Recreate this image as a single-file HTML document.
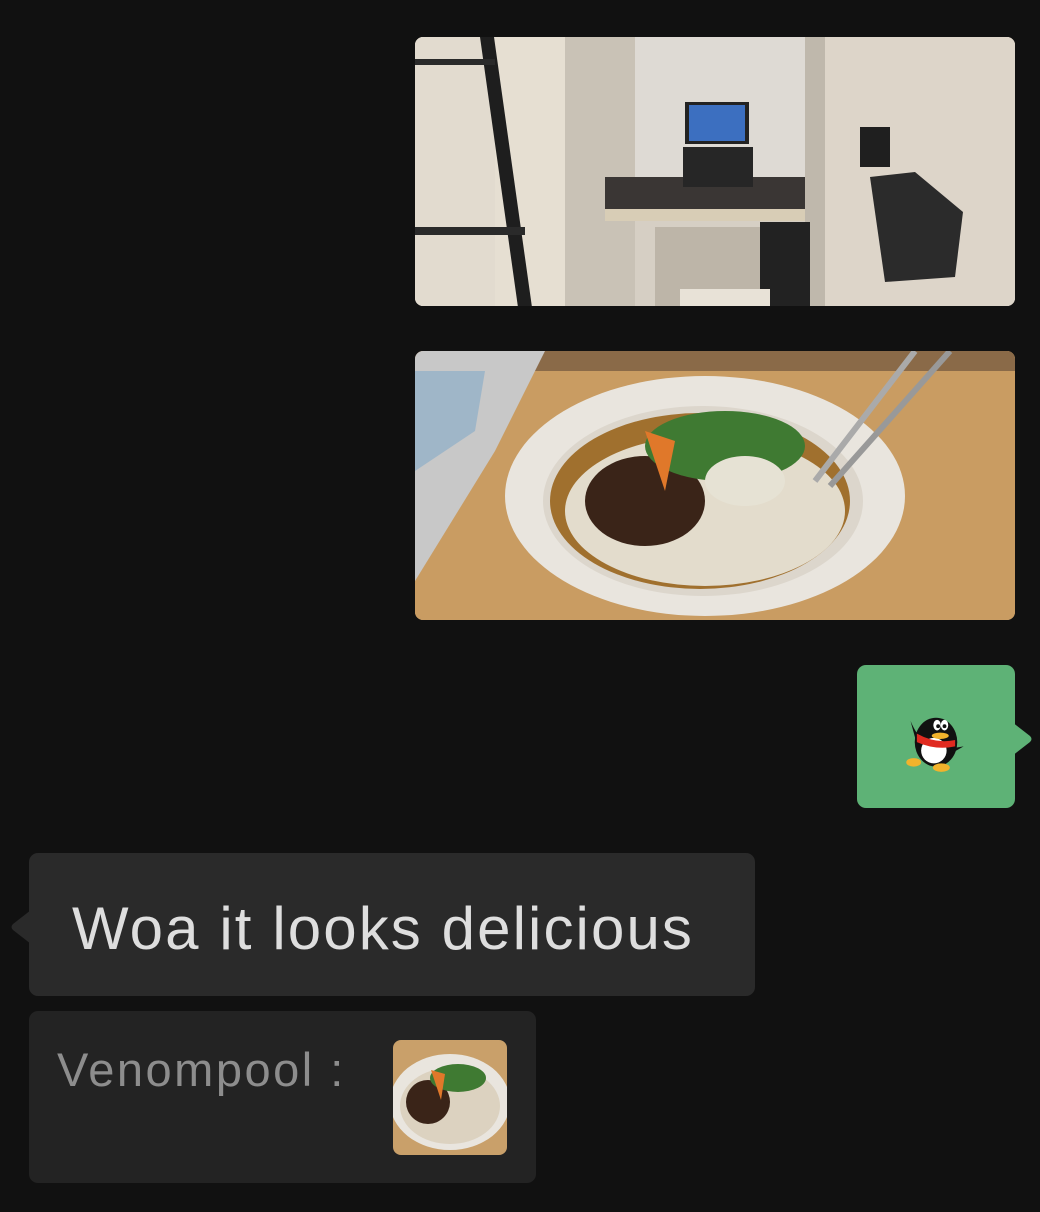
<!DOCTYPE html>
<html><head><meta charset="utf-8"><style>
body{margin:0;width:1040px;height:1212px;background:#111111;position:relative;overflow:hidden;font-family:"Liberation Sans","Noto Sans CJK SC",sans-serif}
.abs{position:absolute}
</style></head><body>
<div class="abs" style="left:415px;top:37px;width:600px;height:269px;border-radius:8px;overflow:hidden;background:#cfc8bd">
<svg width="600" height="269" viewBox="0 0 600 269">
<rect width="600" height="269" fill="#d6cfc4"/>
<rect x="0" y="0" width="90" height="269" fill="#e2dbcf"/>
<rect x="80" y="0" width="115" height="269" fill="#e6dfd2"/>
<rect x="65" y="0" width="14" height="269" fill="#1e1e1e" transform="skewX(8)"/>
<rect x="0" y="190" width="110" height="8" fill="#2a2a2a"/>
<rect x="0" y="22" width="80" height="6" fill="#2a2a2a"/>
<rect x="220" y="0" width="180" height="180" fill="#dedad4"/>
<rect x="150" y="0" width="70" height="269" fill="#c9c2b6"/>
<rect x="190" y="170" width="240" height="14" fill="#d8cdb6"/>
<rect x="190" y="140" width="220" height="32" fill="#3a3634"/>
<rect x="270" y="65" width="64" height="42" fill="#222"/>
<rect x="274" y="68" width="56" height="36" fill="#3c6fc0"/>
<rect x="268" y="110" width="70" height="40" fill="#262626"/>
<rect x="390" y="0" width="20" height="269" fill="#bfb8ac"/>
<rect x="410" y="0" width="190" height="269" fill="#ddd5c9"/>
<path d="M455 140 L500 135 L548 175 L540 240 L470 245 Z" fill="#2b2b2b"/>
<rect x="445" y="90" width="30" height="40" fill="#1f1f1f"/>
<rect x="240" y="190" width="140" height="79" fill="#bdb5a8"/>
<rect x="345" y="185" width="50" height="84" fill="#222"/>
<rect x="265" y="252" width="90" height="17" fill="#e8e2d7"/>
</svg></div>
<div class="abs" style="left:415px;top:351px;width:600px;height:269px;border-radius:8px;overflow:hidden;background:#c9a06a">
<svg width="600" height="269" viewBox="0 0 600 269">
<rect width="600" height="269" fill="#c99c62"/>
<rect x="0" y="0" width="600" height="20" fill="#8a6a48"/>
<path d="M0 0 L130 0 L80 100 L0 230 Z" fill="#c8c8c8"/>
<path d="M0 20 L70 20 L60 80 L0 120 Z" fill="#9fb6c8"/>
<ellipse cx="290" cy="145" rx="200" ry="120" fill="#e9e5de"/>
<ellipse cx="288" cy="150" rx="160" ry="95" fill="#dcd6cc"/>
<ellipse cx="285" cy="150" rx="150" ry="88" fill="#a0702e"/>
<ellipse cx="290" cy="160" rx="140" ry="75" fill="#e3dccc"/>
<ellipse cx="230" cy="150" rx="60" ry="45" fill="#3a2418"/>
<ellipse cx="310" cy="95" rx="80" ry="35" fill="#3f7a32"/>
<path d="M230 80 L250 140 L260 90 Z" fill="#e0782a"/>
<ellipse cx="330" cy="130" rx="40" ry="25" fill="#e6e2d4"/>
<line x1="400" y1="130" x2="500" y2="0" stroke="#aaa" stroke-width="6"/>
<line x1="415" y1="135" x2="535" y2="0" stroke="#999" stroke-width="6"/>
</svg></div>
<div class="abs" style="left:857px;top:665px;width:158px;height:143px;border-radius:9px;background:#5eb276"></div>
<svg class="abs" style="left:1012px;top:722px" width="22" height="34" viewBox="0 0 22 34"><path d="M0 0 L18 14 Q21 17 18 20 L0 34 Z" fill="#5eb276"/></svg>
<svg class="abs" style="left:902px;top:708px" width="68" height="64" viewBox="0 0 64 60">
<ellipse cx="32" cy="32" rx="20" ry="23" fill="#111"/>
<ellipse cx="30" cy="40" rx="12" ry="12" fill="#fff"/>
<path d="M8 12 Q14 26 20 30 L14 34 Z" fill="#111"/>
<path d="M58 36 L44 44 L46 38 Z" fill="#111"/>
<path d="M14 24 Q32 34 50 30 L50 36 Q32 40 14 32 Z" fill="#e02a20"/>
<ellipse cx="36" cy="26" rx="8" ry="3" fill="#f2b32c"/>
<ellipse cx="33" cy="16" rx="3.5" ry="5" fill="#fff"/><ellipse cx="40" cy="16" rx="3.5" ry="5" fill="#fff"/>
<circle cx="34" cy="17" r="1.8" fill="#111"/><circle cx="40" cy="17" r="1.8" fill="#111"/>
<ellipse cx="11" cy="51" rx="7" ry="4" fill="#f2b32c"/><ellipse cx="37" cy="56" rx="8" ry="4" fill="#f2b32c"/>
</svg>
<div class="abs" style="left:29px;top:853px;width:726px;height:143px;border-radius:9px;background:#2a2a2a"></div>
<svg class="abs" style="left:9px;top:910px" width="22" height="34" viewBox="0 0 22 34"><path d="M22 0 L4 14 Q1 17 4 20 L22 34 Z" fill="#2a2a2a"/></svg>
<div class="abs" style="left:72px;top:893px;font-size:60px;line-height:72px;color:#dedede;letter-spacing:2.1px;white-space:nowrap">Woa it looks delicious</div>
<div class="abs" style="left:29px;top:1011px;width:507px;height:172px;border-radius:9px;background:#232323"></div>
<div class="abs" style="left:57px;top:1040px;font-size:47px;line-height:60px;color:#8d8d8d;letter-spacing:2.5px;white-space:nowrap">Venompool :</div>
<div class="abs" style="left:393px;top:1040px;width:114px;height:115px;border-radius:8px;overflow:hidden;background:#c9a06a">
<svg width="114" height="115" viewBox="0 0 114 115">
<ellipse cx="57" cy="62" rx="60" ry="48" fill="#e9e5de"/>
<ellipse cx="57" cy="66" rx="50" ry="38" fill="#dcd2c0"/>
<ellipse cx="35" cy="62" rx="22" ry="22" fill="#3a2418"/>
<ellipse cx="65" cy="38" rx="28" ry="14" fill="#3f7a32"/>
<path d="M38 30 L48 60 L52 34 Z" fill="#e0782a"/>
</svg></div>
</body></html>
